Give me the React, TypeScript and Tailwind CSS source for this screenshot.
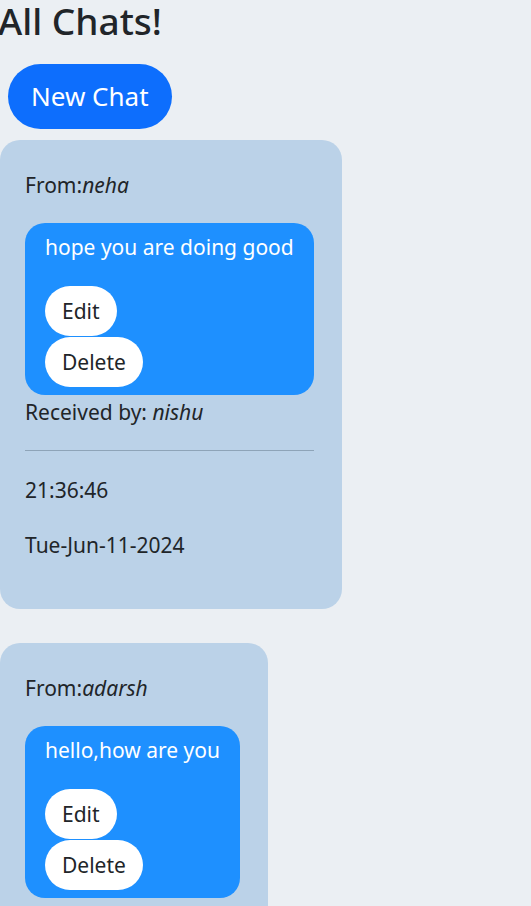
const chats = [
  {
    from: "neha",
    msg: "hope you are doing good",
    to: "nishu",
    time: "21:36:46",
    date: "Tue-Jun-11-2024",
  },
  {
    from: "adarsh",
    msg: "hello,how are you",
    to: "nishu",
    time: "21:36:46",
    date: "Tue-Jun-11-2024",
  },
];

function ChatCard({ chat }: { chat: (typeof chats)[number] }) {
  return (
    <div className="w-fit rounded-[20px] bg-[#bbd2e8] pl-[25px] pr-[28px] pt-[30px] pb-[49px] text-[21px] leading-[30px]">
      <p>
        From:<i>{chat.from}</i>
      </p>
      <div className="mt-[23px] rounded-[20px] bg-[#1e90ff] pl-[20px] pr-[20px] pt-[9px] pb-[8px]">
        <p className="text-white">{chat.msg}</p>
        <div className="mt-[24px] flex flex-col items-start gap-[1px]">
          <button className="rounded-full bg-white px-[17px] py-[10px]">
            Edit
          </button>
          <button className="rounded-full bg-white px-[17px] py-[10px]">
            Delete
          </button>
        </div>
      </div>
      <p className="mt-[2px]">
        Received by: <i>{chat.to}</i>
      </p>
      <hr className="mt-[23px] border-t border-[#8ea4b8]" />
      <p className="mt-[24px]">{chat.time}</p>
      <p className="mt-[25px]">{chat.date}</p>
    </div>
  );
}

export default function App() {
  return (
    <div className="min-h-screen bg-[#ebeff3] font-['Noto_Sans',sans-serif] text-[#212529]">
      <h1 className="-ml-[2px] -mt-[3px] text-[37px] font-medium leading-[48px]">
        All Chats!
      </h1>
      <button className="ml-[8px] mt-[19px] rounded-full bg-[#0d6efd] px-[23px] py-[16px] text-[26px] leading-[33px] text-white">
        New Chat
      </button>
      <div className="mt-[11px] flex flex-col gap-[34px]">
        {chats.map((chat) => (
          <ChatCard key={chat.from} chat={chat} />
        ))}
      </div>
    </div>
  );
}
